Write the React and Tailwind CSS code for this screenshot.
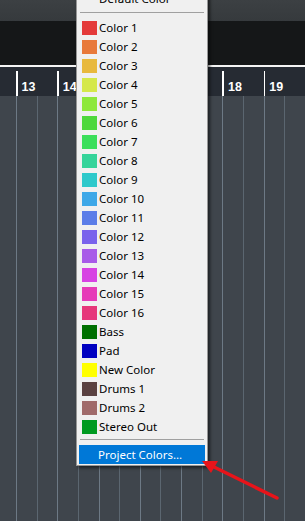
import React from 'react';

const colors = [
  ['Color 1', '#e43a3a'],
  ['Color 2', '#e8793a'],
  ['Color 3', '#e8b93d'],
  ['Color 4', '#d5e84a'],
  ['Color 5', '#8ee83a'],
  ['Color 6', '#4ed83c'],
  ['Color 7', '#3bdf5a'],
  ['Color 8', '#35d49a'],
  ['Color 9', '#2ec9cb'],
  ['Color 10', '#3ea8e8'],
  ['Color 11', '#5b7de8'],
  ['Color 12', '#7a63ec'],
  ['Color 13', '#a85be8'],
  ['Color 14', '#d743e3'],
  ['Color 15', '#e63bb8'],
  ['Color 16', '#e6377a'],
  ['Bass', '#007000'],
  ['Pad', '#0000c0'],
  ['New Color', '#ffff00'],
  ['Drums 1', '#5a4141'],
  ['Drums 2', '#a06a6a'],
  ['Stereo Out', '#009a20'],
];

// bars 13..19 are on screen, the menu covers 15-17
const bars = [13, 14, 15, 16, 17, 18, 19];

function Ruler() {
  return (
    <div className="h-[29px] bg-[#262b33] flex pl-[16px] overflow-hidden">
      {bars.map((n) => (
        <div key={n} className="w-[41.3px] shrink-0 flex items-end">
          <div className="w-[1.5px] h-[25px] bg-white" />
          <span className="ml-[4px] mb-[3px] text-white text-[12.5px] font-bold leading-none">{n}</span>
        </div>
      ))}
    </div>
  );
}

function Grid() {
  const cols = Array.from({ length: 15 });
  return (
    <div className="flex-1 bg-[#3f454c] flex pl-[16px] overflow-hidden">
      {cols.map((_, i) => (
        <div
          key={i}
          className={`w-[20.65px] shrink-0 border-l ${i % 2 === 0 ? 'border-[#6d7985]' : 'border-[#5b6670]'}`}
        />
      ))}
    </div>
  );
}

function MenuRow({ label, color }) {
  return (
    <div className="h-[19px] flex items-center">
      <div className="w-[15px] h-[14px] ml-[3px] mr-[2px]" style={{ backgroundColor: color }} />
      <span className="text-[11.5px] text-black leading-none">{label}</span>
    </div>
  );
}

function ColorMenu() {
  return (
    <div className="absolute left-[76px] top-[-12px] w-[132px] bg-[#f0f0f0] border border-[#979797] shadow-[2px_2px_3px_rgba(0,0,0,0.55)] px-[2px] pb-[1px] font-['Noto_Sans',sans-serif]">
      <div className="h-[19px] flex items-center pl-[20px]">
        <span className="text-[11.5px] text-black leading-none">Default Color</span>
      </div>
      <div className="h-[10px] pt-[4px] px-[1px]">
        <div className="h-px bg-[#a0a0a0]" />
      </div>
      {colors.map(([label, color]) => (
        <MenuRow key={label} label={label} color={color} />
      ))}
      <div className="h-[9px] pt-[3px] px-[1px]">
        <div className="h-px bg-[#a0a0a0]" />
      </div>
      <div className="h-[19px] bg-[#0078d7] flex items-center pl-[19px]">
        <span className="text-[11.5px] text-white leading-none">Project Colors...</span>
      </div>
    </div>
  );
}

export default function App() {
  return (
    <div className="relative w-[305px] h-[521px] overflow-hidden flex flex-col bg-[#3f454c] font-['Liberation_Sans',sans-serif]">
      <div className="h-[21px] bg-gradient-to-b from-[#3c4043] to-[#363a3d]" />
      <div className="h-[44px] bg-[#151718]" />
      <div className="h-[2px] bg-[#f4f4f4]" />
      <Ruler />
      <Grid />
      <ColorMenu />
      <svg className="absolute left-0 top-0" width="305" height="521" viewBox="0 0 305 521">
        <line x1="277" y1="498" x2="212" y2="466" stroke="#e8141a" strokeWidth="3.5" strokeLinecap="round" />
        <polygon points="202,461 218,461 211,473" fill="#e8141a" />
      </svg>
    </div>
  );
}
